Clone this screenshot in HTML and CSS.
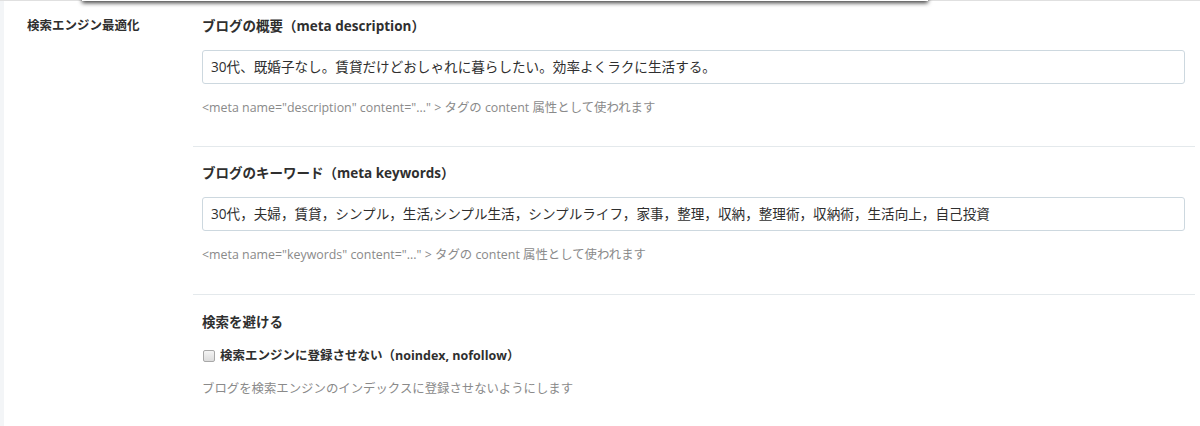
FILE: index.html
```html
<!DOCTYPE html>
<html lang="ja">
<head>
<meta charset="utf-8">
<title>検索エンジン最適化</title>
<link rel="stylesheet" href="styles.css">
</head>
<body>
<div class="page">
  <div class="popup-edge"></div>
  <div class="side-strip"></div>
  <div class="setting-row">
    <div class="row-label">検索エンジン最適化</div>
    <div class="row-body">
      <div class="field-group">
        <div class="field-title">ブログの概要（meta description）</div>
        <div class="text-input">30代、既婚子なし。賃貸だけどおしゃれに暮らしたい。効率よくラクに生活する。</div>
        <div class="field-help">&lt;meta name="description" content="..." &gt; タグの content 属性として使われます</div>
      </div>
      <div class="field-group">
        <div class="field-title">ブログのキーワード（meta keywords）</div>
        <div class="text-input">30代，夫婦，賃貸，シンプル，生活,シンプル生活，シンプルライフ，家事，整理，収納，整理術，収納術，生活向上，自己投資</div>
        <div class="field-help">&lt;meta name="keywords" content="..." &gt; タグの content 属性として使われます</div>
      </div>
      <div class="field-group last">
        <div class="field-title">検索を避ける</div>
        <label class="check-line"><span class="check-box"></span>検索エンジンに登録させない（noindex, nofollow）</label>
        <div class="field-help help-last">ブログを検索エンジンのインデックスに登録させないようにします</div>
      </div>
    </div>
  </div>
</div>
</body>
</html>
```

FILE: styles.css
```css
html, body {
  margin: 0;
  padding: 0;
  background: #ffffff;
}
body {
  font-family: "Open Sans", "Noto Sans CJK JP", sans-serif;
  color: #333333;
  overflow: hidden;
}
.page {
  position: relative;
  width: 1200px;
  height: 426px;
  display: flex;
  border-top: 1px solid #e0e0e0;
  box-sizing: border-box;
}
.popup-edge {
  position: absolute;
  top: -12px;
  left: 82px;
  width: 846px;
  height: 12px;
  background: #ffffff;
  box-shadow: 0 2px 4px rgba(0, 0, 0, 0.75);
}
.side-strip {
  width: 4px;
  background: #f3f5f7;
  flex: none;
}
.setting-row {
  display: flex;
  flex: 1;
}
.row-label {
  width: 166px;
  padding: 15px 0 0 23px;
  font-size: 12.5px;
  font-weight: 700;
  line-height: 20px;
  flex: none;
  color: #2f2f2f;
}
.row-body {
  width: 1002px;
  flex: none;
}
.field-group {
  padding: 15px 10px 28px 9px;
  border-bottom: 1px solid #e4e9ec;
}
.field-group + .field-group {
  padding-top: 16px;
  padding-bottom: 29px;
}
.field-group.last {
  border-bottom: none;
  padding-top: 17px;
}
.field-title {
  font-size: 13.5px;
  font-weight: 700;
  line-height: 20px;
  margin-bottom: 14px;
  color: #2f2f2f;
}
.text-input {
  height: 34px;
  box-sizing: border-box;
  border: 1px solid #cdd8df;
  border-radius: 3px;
  padding: 0 8px;
  font-size: 13.6px;
  line-height: 32px;
  color: #2f2f2f;
  background: #fff;
  white-space: nowrap;
  overflow: hidden;
}
.field-help {
  margin-top: 14px;
  font-size: 12.4px;
  line-height: 20px;
  color: #8a8a8a;
}
.check-line {
  display: flex;
  align-items: center;
  font-size: 12.5px;
  font-weight: 700;
  line-height: 20px;
  margin-top: 1px;
  color: #2f2f2f;
}
.check-box {
  width: 10px;
  height: 10px;
  border: 1px solid #a8a8a8;
  border-radius: 2px;
  background: linear-gradient(#f4f4f4, #dcdcdc);
  margin: 0 5px 0 1px;
  flex: none;
}
.help-last {
  margin-top: 13px;
}
```
